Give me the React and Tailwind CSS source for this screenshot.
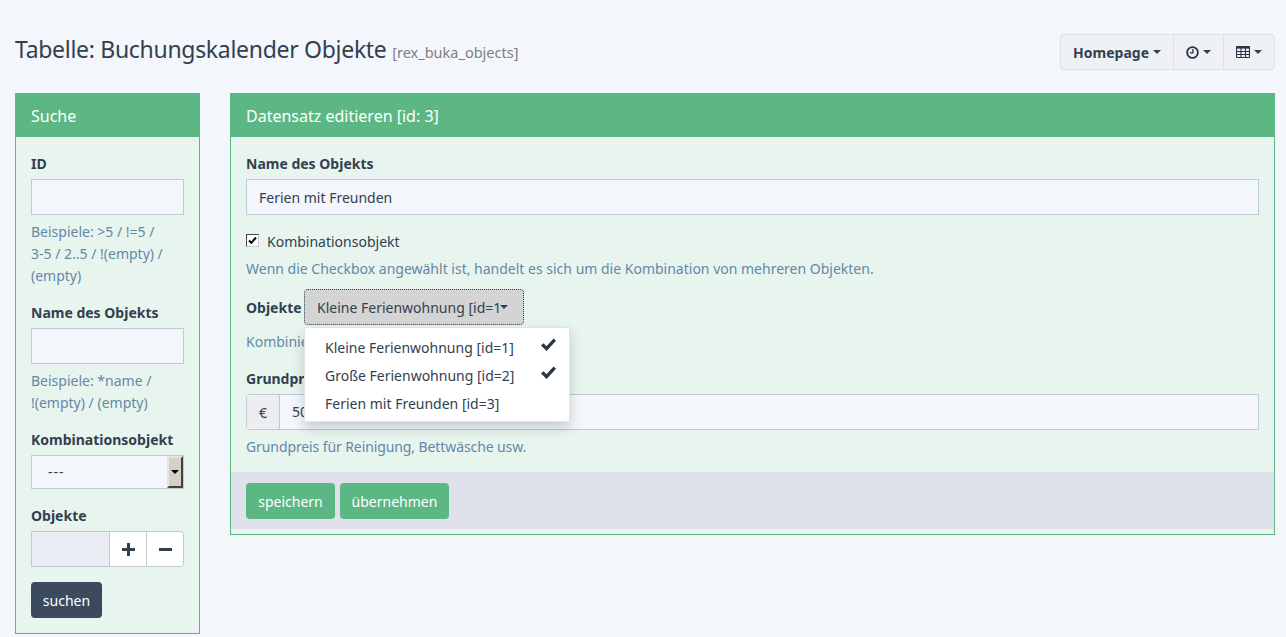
function Caret({ className = '' }) {
  return <span className={`inline-block w-0 h-0 border-x-[4px] border-x-transparent border-t-[4px] border-t-current ${className}`} />
}

function Label({ children, className = '' }) {
  return <div className={`font-bold text-[14px] leading-[22px] text-[#324050] mb-1 ${className}`}>{children}</div>
}

function Help({ children, className = '' }) {
  return <p className={`text-[14px] leading-[22px] text-[#6487a8] ${className}`}>{children}</p>
}

function TextInput({ value = '', className = '' }) {
  return (
    <div className={`h-9 border border-[#c1c9d6] bg-[#f3f6fb] px-3 text-[14px] leading-[36px] text-[#324050] ${className}`}>
      {value}
    </div>
  )
}

function Panel({ title, className = '', children }) {
  return (
    <section className={`border border-[#5cb785] bg-[#e8f5ee] ${className}`}>
      <div className="-mx-px -mt-px h-11 bg-[#5cb785] px-4 pt-px text-[16px] leading-[44px] text-white">{title}</div>
      {children}
    </section>
  )
}

function ClockIcon() {
  return (
    <svg width="13" height="13" viewBox="0 0 13 13" fill="none" stroke="#2a3646" strokeWidth="1.8">
      <circle cx="6.5" cy="6.5" r="5.4" />
      <path d="M6.9 3v3.9H3.8" strokeWidth="1.3" />
    </svg>
  )
}

function TableIcon() {
  return (
    <svg width="14" height="12" viewBox="0 0 14 12" fill="none" stroke="#2a3646" strokeWidth="1.1">
      <rect x="0.5" y="0.5" width="13" height="11" rx="1" />
      <path d="M0.5 1.5h13" strokeWidth="2.2" />
      <path d="M0.5 5.5h13M0.5 8.5h13M5 1v10M9.5 1v10" />
    </svg>
  )
}

function OkIcon({ className = '' }) {
  return (
    <svg width="15" height="13" viewBox="0 0 15 13" fill="#2a3646" className={className}>
      <path d="M0 7.6 2.4 5.2 5.5 8.2 12.6 0.4 15 2.8 5.6 13z" />
    </svg>
  )
}

function Sidebar() {
  return (
    <Panel title="Suche" className="w-[185px] shrink-0 h-[541px]">
      <div className="px-[15px] pt-[16px]">
        <Label>ID</Label>
        <TextInput />
        <Help className="mt-1.5">Beispiele: &gt;5 / !=5 /<br />3-5 / 2..5 / !(empty) /<br />(empty)</Help>
        <Label className="mt-[15px]">Name des Objekts</Label>
        <TextInput />
        <Help className="mt-1.5">Beispiele: *name /<br />!(empty) / (empty)</Help>
        <Label className="mt-[15px]">Kombinationsobjekt</Label>
        <div className="flex h-[34px] border border-[#c1c9d6] bg-[#f3f6fb] text-[14px] leading-[32px] text-[#324050]">
          <span className="flex-1 pl-4 tracking-[1px]">---</span>
          <span className="flex w-4 items-center justify-center border-2 border-t-[#e8e5de] border-l-[#e8e5de] border-r-[#45413a] border-b-[#45413a] bg-[#d4d0c8] text-black">
            <Caret />
          </span>
        </div>
        <Label className="mt-[16px]">Objekte</Label>
        <div className="flex h-9 rounded-r border border-[#c1c9d6] text-[#324050]">
          <div className="flex-1 bg-[#e9ecf3]" />
          <div className="flex w-[37px] items-center justify-center border-l border-[#c1c9d6] bg-white">
            <svg width="13" height="13" viewBox="0 0 13 13" fill="#324050"><path d="M5 0h3v5h5v3H8v5H5V8H0V5h5z" /></svg>
          </div>
          <div className="flex w-[37px] items-center justify-center rounded-r border-l border-[#c1c9d6] bg-white">
            <svg width="13" height="13" viewBox="0 0 13 13" fill="#324050"><rect y="5" width="13" height="3" /></svg>
          </div>
        </div>
        <button className="mt-[15px] block h-9 w-[71px] rounded bg-[#3b4b5d] text-[14px] text-white">suchen</button>
      </div>
    </Panel>
  )
}

function ObjectMenu() {
  const items = [
    ['Kleine Ferienwohnung [id=1]', true],
    ['Große Ferienwohnung [id=2]', true],
    ['Ferien mit Freunden [id=3]', false],
  ]
  return (
    <div className="absolute left-[58px] top-[38px] z-10 h-[95px] w-[266px] border border-[#dfe3ea] bg-white pt-[6px] shadow-[0_6px_12px_rgba(0,0,0,0.18)]">
      {items.map(([name, on]) => (
        <div key={name} className="relative h-7 pl-5 text-[14px] leading-7 text-[#324050]">
          {name}
          {on && <OkIcon className="absolute right-[13px] top-[4px]" />}
        </div>
      ))}
    </div>
  )
}

function EditForm() {
  return (
    <Panel title="Datensatz editieren [id: 3]" className="flex-1 h-[442px]">
      <div className="px-[15px] pt-[16px]">
        <Label>Name des Objekts</Label>
        <TextInput value="Ferien mit Freunden" />
        <label className="mt-[15px] flex h-[22px] items-center text-[14px] text-[#324050]">
          <span className="mr-2 mb-[2px] flex h-[13px] w-[13px] items-center justify-center border border-t-[#444] border-l-[#444] border-r-[#ccc] border-b-[#ccc] bg-white">
            <svg width="9" height="9" viewBox="0 0 9 9" fill="none" stroke="#000" strokeWidth="2"><path d="M1 4.5l2.4 2.4L8 1.5" /></svg>
          </span>
          Kombinationsobjekt
        </label>
        <Help className="mt-[6px]">Wenn die Checkbox angewählt ist, handelt es sich um die Kombination von mehreren Objekten.</Help>
        <div className="relative mt-[9px] flex h-9 items-center">
          <span className="w-[58px] text-[14px] font-bold text-[#324050]">Objekte</span>
          <div className="flex h-9 w-[220px] items-center rounded border border-dotted border-[#2f3d4e] bg-[#d4d4d4] pl-3 text-[14px] text-[#324050]">
            <span className="w-[183px] overflow-hidden whitespace-nowrap">Kleine Ferienwohnung [id=1]</span>
            <Caret />
          </div>
          <ObjectMenu />
        </div>
        <Help className="mt-1.5">Kombinierte Objekte</Help>
        <Label className="mt-[15px]">Grundpreis</Label>
        <div className="flex h-9 rounded-l border border-[#c1c9d6] text-[14px] text-[#324050]">
          <span className="flex w-[33px] items-center justify-center border-r border-[#c1c9d6] bg-[#eceef2]">€</span>
          <span className="flex-1 bg-[#f3f6fb] px-3 leading-[34px]">50</span>
        </div>
        <Help className="mt-1.5 tracking-[-0.1px]">Grundpreis für Reinigung, Bettwäsche usw.</Help>
      </div>
      <div className="mt-[14px] flex h-[57px] items-start gap-[5px] bg-[#dfe2ea] px-[15px] pt-[11px]">
        <button className="h-9 w-[89px] rounded bg-[#5cb785] text-[14px] text-white">speichern</button>
        <button className="h-9 w-[109px] rounded bg-[#5cb785] text-[14px] text-white">übernehmen</button>
      </div>
    </Panel>
  )
}

export default function App() {
  return (
    <div className="h-[637px] overflow-hidden bg-[#f3f6fb] pl-[15px] pr-[11px] font-['Noto_Sans','Open_Sans',sans-serif]">
      <header className="flex h-[93px] items-start justify-between pt-[34px]">
        <h1 className="-mt-px text-[23px] leading-[32px] tracking-[-0.3px] text-[#324050]">
          Tabelle: Buchungskalender Objekte <small className="text-[14.5px] tracking-normal text-[#7f7f7f]">[rex_buka_objects]</small>
        </h1>
        <div className="flex h-9 rounded border border-[#dfe2ea] bg-[#eef0f4] text-[14px] text-[#324050]">
          <button className="flex items-center gap-1 border-r border-[#dfe2ea] px-3 font-bold">Homepage <Caret /></button>
          <button className="flex items-center gap-1 border-r border-[#dfe2ea] px-3"><ClockIcon /><Caret /></button>
          <button className="flex items-center gap-1 px-3"><TableIcon /><Caret /></button>
        </div>
      </header>
      <div className="flex items-start gap-[30px]">
        <Sidebar />
        <EditForm />
      </div>
    </div>
  )
}
